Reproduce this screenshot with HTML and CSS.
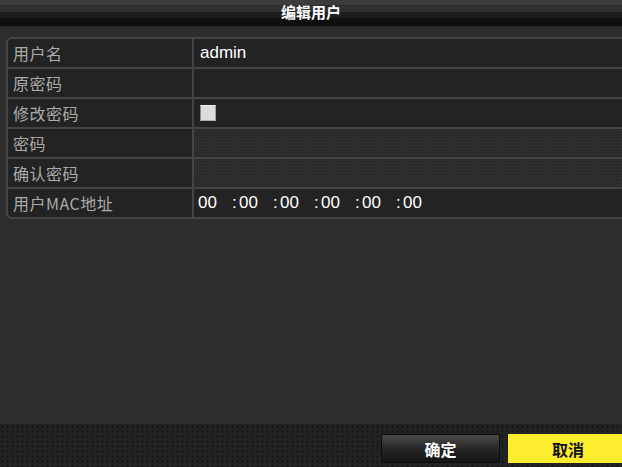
FILE: index.html
```html
<!DOCTYPE html>
<html lang="zh-CN">
<head>
<meta charset="utf-8">
<title>编辑用户</title>
<link rel="stylesheet" href="styles.css">
</head>
<body>
<div class="dialog">
  <div class="titlebar">编辑用户</div>
  <div class="content">
    <div class="table">
      <div class="cell label">用户名</div>
      <div class="cell value">admin</div>
      <div class="cell label">原密码</div>
      <div class="cell value"></div>
      <div class="cell label">修改密码</div>
      <div class="cell value"><span class="checkbox"></span></div>
      <div class="cell label">密码</div>
      <div class="cell value disabled"></div>
      <div class="cell label">确认密码</div>
      <div class="cell value disabled"></div>
      <div class="cell label">用户MAC地址</div>
      <div class="cell value mac">
        <span class="oct">00</span><span class="colon">:</span>
        <span class="oct">00</span><span class="colon">:</span>
        <span class="oct">00</span><span class="colon">:</span>
        <span class="oct">00</span><span class="colon">:</span>
        <span class="oct">00</span><span class="colon">:</span>
        <span class="oct">00</span>
      </div>
    </div>
  </div>
  <div class="footer">
    <button class="btn btn-ok">确定</button>
    <button class="btn btn-cancel">取消</button>
  </div>
</div>
</body>
</html>
```

FILE: styles.css
```css
html, body {
  margin: 0;
  padding: 0;
  width: 622px;
  height: 467px;
  overflow: hidden;
  background: #2c2c2c;
  font-family: "Liberation Sans", "Noto Sans CJK SC", sans-serif;
}

.dialog {
  display: flex;
  flex-direction: column;
  width: 622px;
  height: 467px;
  overflow: hidden;
}

.titlebar {
  height: 28px;
  flex: none;
  box-sizing: border-box;
  text-align: center;
  color: #ffffff;
  font-family: "Noto Sans CJK SC", sans-serif;
  font-weight: bold;
  font-size: 15px;
  line-height: 24px;
  background:
    linear-gradient(to bottom,
      #3c3c3c 0px, #3c3c3c 5px,
      #2a2a2a 5px, #333 7px,
      #303030 7px, #303030 12px,
      #1e1e1e 12px, #1c1c1c 18px,
      #101010 18px, #0e0e0e 26px,
      #2a2a2a 26px, #2a2a2a 28px);
}

.content {
  flex: 1;
  padding: 9px 0 0 6px;
  background: #2d2d2d;
}

.table {
  display: grid;
  grid-template-columns: 184px 1fr;
  grid-auto-rows: 28px;
  gap: 2px;
  width: 640px;
  background: #454545;
  border: 2px solid #454545;
  border-right: none;
  border-radius: 6px 0 0 6px;
  overflow: hidden;
}

.cell {
  background: #232323;
  display: flex;
  align-items: center;
  font-size: 17px;
}

.label {
  color: #ababab;
  padding-left: 5px;
  font-family: "Noto Sans CJK SC", sans-serif;
  font-size: 16px;
  letter-spacing: 0.5px;
}

.value {
  color: #ffffff;
  padding-left: 6px;
}

.disabled {
  background-color: #2b2b2b;
  background-image: radial-gradient(circle, #383838 0.8px, transparent 1px);
  background-size: 3px 3px;
}

.checkbox {
  width: 16px;
  height: 16px;
  box-sizing: border-box;
  background: #dcdcdc;
  border-top: 1px solid #f0f0f0;
  border-left: 1px solid #8a8a8a;
  border-right: 1px solid #a0a0a0;
  border-bottom: 1px solid #b0b0b0;
}

.mac {
  padding-left: 4px;
}

.oct {
  display: inline-block;
  width: 34px;
}

.colon {
  display: inline-block;
  width: 7px;
}

.footer {
  height: 43px;
  flex: none;
  box-sizing: border-box;
  display: flex;
  justify-content: flex-end;
  gap: 8px;
  padding-top: 10px;
  margin-right: -6px;
  background-color: #232323;
  background-image: radial-gradient(circle, #0e0e0e 0.8px, transparent 1.1px);
  background-size: 5px 5px;
}

.btn {
  height: 29px;
  border: none;
  padding: 0;
  font-family: "Noto Sans CJK SC", sans-serif;
  font-weight: bold;
  font-size: 16px;
  cursor: pointer;
}

.btn-ok {
  width: 119px;
  color: #ffffff;
  border: 1px solid #0c0c0c;
  border-radius: 2px;
  background: linear-gradient(to bottom, #4a4a4a 0%, #333 35%, #262626 50%, #141414 100%);
}

.btn-cancel {
  width: 120px;
  color: #111111;
  background: #fcec2e;
}
```
